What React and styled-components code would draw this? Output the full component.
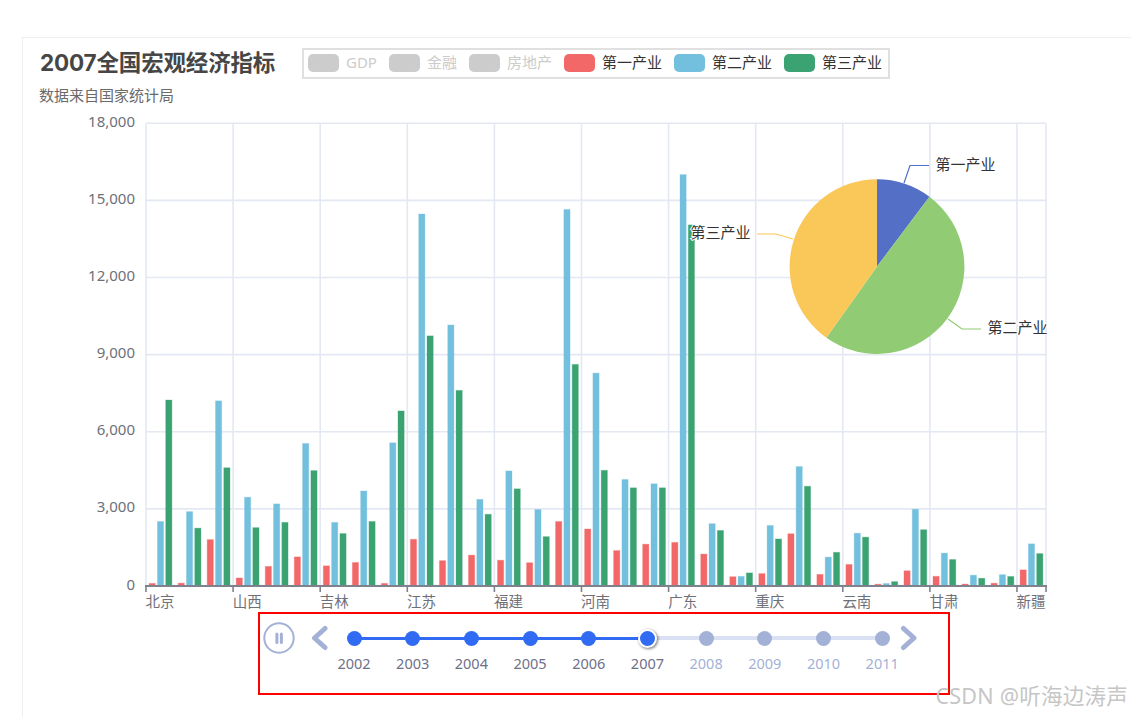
import React from "react";
import styled, { createGlobalStyle } from "styled-components";

const FONT = `"Noto Sans", "Noto Sans CJK SC", sans-serif`;

const GlobalStyle = createGlobalStyle`
  html, body {
    margin: 0;
    padding: 0;
    background: #fff;
    overflow: hidden;
  }
  body {
    font-family: ${FONT};
  }
`;

const provinces = [
  "北京", "天津", "河北", "山西", "内蒙古", "辽宁", "吉林", "黑龙江", "上海", "江苏", "浙江",
  "安徽", "福建", "江西", "山东", "河南", "湖北", "湖南", "广东", "广西", "海南", "重庆",
  "四川", "贵州", "云南", "西藏", "陕西", "甘肃", "青海", "宁夏", "新疆"
];

const primary = [
  101, 110, 1805, 312, 762, 1133, 784, 915, 102, 1816, 986, 1200, 1002, 905, 2509, 2218,
  1378, 1626, 1696, 1241, 361, 482, 2032, 452, 837, 70, 592, 377, 75, 108, 628
];
const secondary = [
  2509, 2893, 7202, 3454, 3194, 5544, 2475, 3696, 5571, 14471, 10154, 3370, 4476, 2975, 14647, 8282,
  4143, 3977, 16004, 2425, 375, 2355, 4646, 1124, 2053, 98, 2986, 1280, 421, 442, 1639
];
const tertiary = [
  7236, 2250, 4600, 2270, 2475, 4490, 2040, 2510, 6810, 9730, 7610, 2790, 3780, 1920, 8620, 4500,
  3820, 3820, 14047, 2160, 510, 1830, 3880, 1310, 1900, 170, 2190, 1030, 300, 370, 1260
];

const series = [
  { name: "第一产业", color: "#f26868", data: primary, offset: -8.3 },
  { name: "第二产业", color: "#73c0de", data: secondary, offset: 0 },
  { name: "第三产业", color: "#3ba272", data: tertiary, offset: 8.3 }
];

const legend = [
  { name: "GDP", off: true },
  { name: "金融", off: true },
  { name: "房地产", off: true },
  { name: "第一产业", color: "#f26868" },
  { name: "第二产业", color: "#73c0de" },
  { name: "第三产业", color: "#3ba272" }
];

const years = [2002, 2003, 2004, 2005, 2006, 2007, 2008, 2009, 2010, 2011];
const CURRENT = 2007;

// plot area, in page pixels (the svg viewBox starts at the card's content corner)
const LEFT = 146;
const RIGHT = 1046;
const TOP = 123.3;
const BOTTOM = 586;
const BAND = (RIGHT - LEFT) / provinces.length;

const yOf = v => BOTTOM - (v * (BOTTOM - TOP)) / 18000;

const PIE = { x: 877, y: 266.6, r: 87.4 };

const arc = (from, to) => {
  const pt = a => {
    const rad = (a * Math.PI) / 180;
    return `${PIE.x + PIE.r * Math.sin(rad)} ${PIE.y - PIE.r * Math.cos(rad)}`;
  };
  const large = to - from > 180 ? 1 : 0;
  return `M${PIE.x} ${PIE.y} L${pt(from)} A${PIE.r} ${PIE.r} 0 ${large} 1 ${pt(to)} Z`;
};

const Card = styled.div`
  position: relative;
  box-sizing: border-box;
  margin: 37px 0 0 22px;
  height: 680px;
  border-left: 1px solid #eeeeee;
  border-top: 1px solid #eeeeee;
  padding-top: 10px;
`;

const Header = styled.div`
  display: flex;
  align-items: center;
  height: 31px;
  padding-left: 17px;
`;

const Title = styled.h1`
  margin: -2px 0 0;
  width: 235px;
  font-family: Inter, "Noto Sans CJK SC", sans-serif;
  font-size: 22.5px;
  font-weight: 700;
  letter-spacing: -0.17px;
  line-height: 31px;
  color: #464646;
  white-space: nowrap;
`;

const Legend = styled.div`
  box-sizing: border-box;
  display: flex;
  align-items: center;
  gap: 12px;
  height: 31px;
  width: 588px;
  margin-left: 27px;
  padding-left: 4px;
  border: 2px solid #e0e0e0;
`;

const LegendItem = styled.div`
  display: flex;
  align-items: center;
  gap: 7px;
  font-size: 15px;
  line-height: 18px;
  color: ${p => (p.$off ? "#cccccc" : "#333333")};
  white-space: nowrap;
`;

const Swatch = styled.span`
  width: 31px;
  height: 18px;
  margin-top: -1px;
  border-radius: 5px;
  background: ${p => p.$color};
`;

const LegendText = styled.span`
  margin-top: -3px;
`;

const Subtitle = styled.div`
  margin: 7px 0 1px 16px;
  font-size: 15px;
  line-height: 18px;
  color: #6a6a6a;
`;

const Chart = styled.svg`
  display: block;
  width: 1108px;
  height: 508px;
`;

const GridLine = styled.line`
  stroke: #e3e8f3;
  stroke-width: 1.6;
`;

const AxisLine = styled.line`
  stroke: #7f828c;
  stroke-width: ${p => p.$w || 1.6};
`;

const AxisText = styled.text`
  font-family: ${FONT};
  font-size: ${p => p.$size || 14.5}px;
  fill: #6e7079;
`;

const Bar = styled.rect`
  fill: ${p => p.$color};
  stroke: ${p => p.$color};
  stroke-opacity: 0.3;
  stroke-width: 1;
`;

const Guide = styled.polyline`
  fill: none;
  stroke: ${p => p.$color};
  stroke-width: 1.2;
`;

const PieLabel = styled.text`
  font-family: ${FONT};
  font-size: 15px;
  fill: #333333;
  stroke: #ffffff;
  stroke-width: 2px;
  paint-order: stroke;
`;

const Timeline = styled.div`
  box-sizing: border-box;
  display: flex;
  align-items: flex-start;
  width: 692px;
  height: 83px;
  margin: -1px 0 0 235px;
  padding: 8px 0 0 3px;
  border: 2px solid #ff0000;
`;

const IconSvg = styled.svg`
  display: block;
  flex: none;
  margin: ${p => p.$margin || 0};
`;

const Steps = styled.div`
  display: flex;
  flex: none;
  gap: 28.7px;
`;

const Step = styled.div`
  position: relative;
  display: flex;
  flex-direction: column;
  align-items: center;
  width: 30px;

  &::before {
    content: "";
    display: ${p => (p.$last ? "none" : "block")};
    position: absolute;
    left: 15px;
    top: ${p => (p.$done ? 14.5 : 14)}px;
    width: 58.7px;
    height: ${p => (p.$done ? 3 : 4)}px;
    background: ${p => (p.$done ? "#316bf3" : "#dae1f5")};
  }
`;

const DotRow = styled.div`
  position: relative;
  display: flex;
  align-items: center;
  justify-content: center;
  height: 32px;
`;

const Dot = styled.span`
  display: block;
  box-sizing: content-box;
  width: 15px;
  height: 15px;
  border-radius: 50%;
  background: ${p => (p.$future ? "#a4b1d7" : "#316bf3")};
  ${p => p.$current && "border: 2.5px solid #fff; box-shadow: 1px 1px 3px rgba(0, 0, 0, 0.55);"}
`;

const Year = styled.span`
  margin-top: -1px;
  font-size: 14.5px;
  line-height: 20px;
  color: ${p => (p.$future ? "#a4b1d7" : "#6e7089")};
`;

const Watermark = styled.div`
  position: absolute;
  right: 3px;
  bottom: 7px;
  font-size: 21.5px;
  letter-spacing: 0.25px;
  line-height: 28px;
  color: #c6c6c6;
  white-space: nowrap;
`;

const BarChart = () => (
  <Chart viewBox="23 105 1108 508">
    {[0, 3000, 6000, 9000, 12000, 15000, 18000].map(v => (
      <g key={v}>
        {v > 0 && <GridLine x1={LEFT} x2={RIGHT} y1={yOf(v)} y2={yOf(v)} />}
        <AxisText x={135} y={yOf(v) - 2.5} $size={15} textAnchor="end" dominantBaseline="central">
          {v.toLocaleString("en-US")}
        </AxisText>
      </g>
    ))}
    {provinces.map((name, i) =>
      i % 3 === 0 ? (
        <GridLine key={name} x1={LEFT + i * BAND} x2={LEFT + i * BAND} y1={TOP} y2={BOTTOM} />
      ) : null
    )}
    <GridLine x1={RIGHT} x2={RIGHT} y1={TOP} y2={BOTTOM} />

    {series.map(s =>
      s.data.map((v, i) => (
        <Bar
          key={s.name + i}
          $color={s.color}
          x={LEFT + (i + 0.5) * BAND + s.offset - 3.1}
          y={yOf(v)}
          width={6.2}
          height={BOTTOM - yOf(v)}
        />
      ))
    )}

    <AxisLine x1={LEFT - 1} x2={RIGHT + 1} y1={BOTTOM} y2={BOTTOM} $w={2} />
    {provinces.map((name, i) =>
      i % 3 === 0 ? (
        <g key={name}>
          <AxisLine x1={LEFT + i * BAND} x2={LEFT + i * BAND} y1={BOTTOM} y2={BOTTOM + 6} />
          <AxisText x={LEFT + (i + 0.5) * BAND - 0.4} y={BOTTOM + 14.5} textAnchor="middle" dominantBaseline="central">
            {name}
          </AxisText>
        </g>
      ) : null
    )}
    <AxisLine x1={RIGHT} x2={RIGHT} y1={BOTTOM} y2={BOTTOM + 6} />

    <path d={arc(0, 36.9)} fill="#5470c6" />
    <path d={arc(36.9, 215.4)} fill="#91cc75" />
    <path d={arc(215.4, 360)} fill="#fac858" />

    <Guide $color="#5470c6" points="904,183 910,165.5 929,165.5" />
    <Guide $color="#91cc75" points="948,319 962,329 981,329" />
    <Guide $color="#fac858" points="793,239 776,234 757,234" />

    <PieLabel x={935.5} y={164} dominantBaseline="central">第一产业</PieLabel>
    <PieLabel x={987.5} y={327} dominantBaseline="central">第二产业</PieLabel>
    <PieLabel x={690.5} y={232} dominantBaseline="central">第三产业</PieLabel>
  </Chart>
);

const TimelineBar = () => (
  <Timeline>
    <IconSvg width="32" height="32" viewBox="0 0 32 32">
      <circle cx="16" cy="16" r="14.7" fill="none" stroke="#a4b1d7" strokeWidth="2" />
      <line x1="13.9" y1="12" x2="13.9" y2="20.5" stroke="#a4b1d7" strokeWidth="3" strokeLinecap="round" />
      <line x1="18.4" y1="12" x2="18.4" y2="20.5" stroke="#a4b1d7" strokeWidth="3" strokeLinecap="round" />
    </IconSvg>
    <IconSvg width="18" height="32" viewBox="0 0 18 32" $margin="0 10px 0 16px">
      <polyline
        points="14,6.5 3.5,16 14,25.5"
        fill="none"
        stroke="#a4b1d7"
        strokeWidth="5"
        strokeLinecap="round"
        strokeLinejoin="round"
      />
    </IconSvg>
    <Steps>
      {years.map(y => (
        <Step key={y} $done={y < CURRENT} $last={y === 2011}>
          <DotRow>
            <Dot $current={y === CURRENT} $future={y > CURRENT} />
          </DotRow>
          <Year $future={y > CURRENT}>{y}</Year>
        </Step>
      ))}
    </Steps>
    <IconSvg width="18" height="32" viewBox="0 0 18 32" $margin="0 0 0 2.4px">
      <polyline
        points="3.5,6.5 14,16 3.5,25.5"
        fill="none"
        stroke="#a4b1d7"
        strokeWidth="5"
        strokeLinecap="round"
        strokeLinejoin="round"
      />
    </IconSvg>
  </Timeline>
);

export default function App() {
  return (
    <Card>
      <GlobalStyle />
      <Header>
        <Title>2007全国宏观经济指标</Title>
        <Legend>
          {legend.map(item => (
            <LegendItem key={item.name} $off={item.off}>
              <Swatch $color={item.off ? "#cccccc" : item.color} />
              <LegendText>{item.name}</LegendText>
            </LegendItem>
          ))}
        </Legend>
      </Header>
      <Subtitle>数据来自国家统计局</Subtitle>
      <BarChart />
      <TimelineBar />
      <Watermark>CSDN @听海边涛声</Watermark>
    </Card>
  );
}
